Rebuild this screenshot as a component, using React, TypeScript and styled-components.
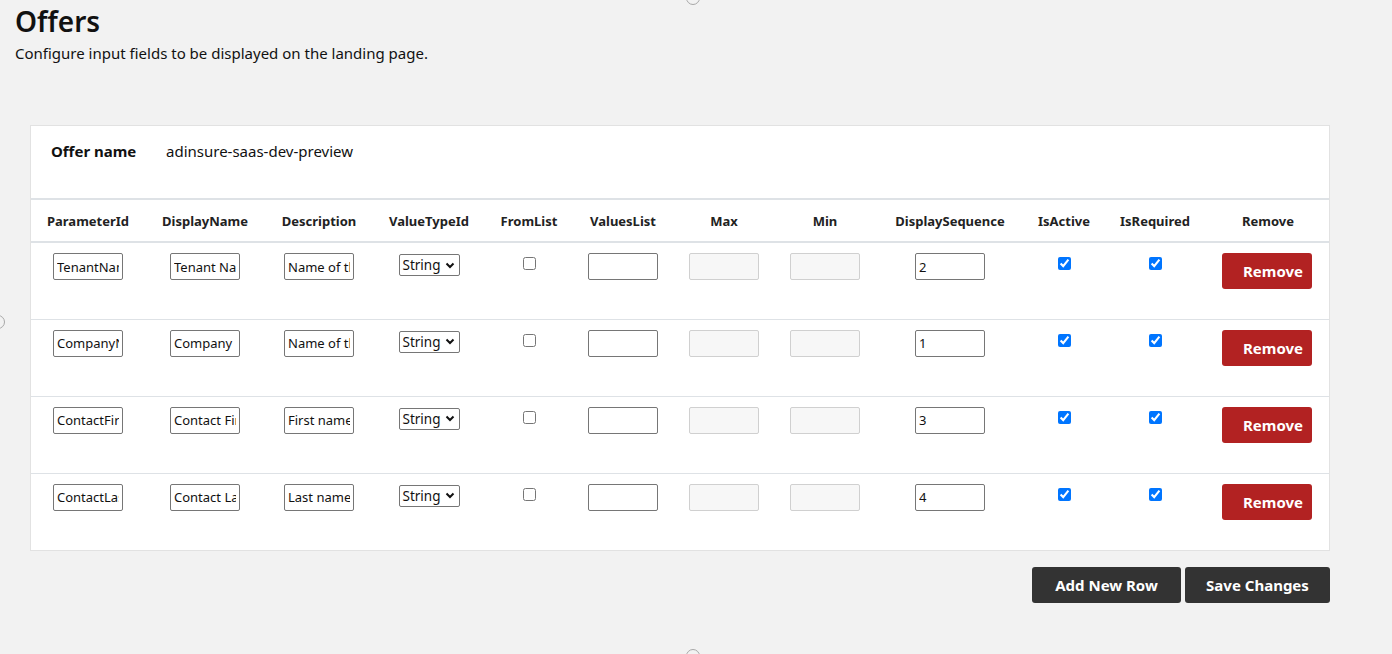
import React from "react";
import styled, { createGlobalStyle } from "styled-components";

const Global = createGlobalStyle`
  html, body { margin: 0; padding: 0; background: #f2f2f2; }
  body { font-family: "Noto Sans", "Open Sans", "Liberation Sans", sans-serif; color: #111; }
  * { box-sizing: border-box; }
`;

const Page = styled.div`
  position: relative;
  width: 1392px;
  height: 654px;
  overflow: hidden;
  padding: 0 62px 0 15px;
`;

const Title = styled.h1`
  margin: 0;
  padding-top: 2px;
  font-size: 28px;
  font-weight: 600;
  line-height: 38px;
  color: #111;
`;

const Subtitle = styled.p`
  margin: 0;
  padding-top: 2px;
  font-size: 15px;
  line-height: 22px;
  color: #111;
`;

const Card = styled.div`
  margin: 61px 0 0 15px;
  width: 1300px;
  background: #fff;
  border: 1px solid #e2e2e2;
`;

const OfferRow = styled.div`
  display: flex;
  align-items: center;
  height: 72px;
  padding: 0 20px 22px;
  font-size: 15px;
`;

const OfferLabel = styled.span`
  width: 115px;
  font-weight: 700;
`;

const Table = styled.table`
  width: 100%;
  border-collapse: collapse;
  table-layout: fixed;
`;

const Th = styled.th`
  height: 43px;
  font-size: 13px;
  font-weight: 700;
  color: #222;
  text-align: center;
  border-top: 2px solid #dee2e6;
  border-bottom: 2px solid #dee2e6;
  padding: 0;
`;

const Tr = styled.tr<{ $last?: boolean }>`
  height: 77px;
  border-bottom: ${(p) => (p.$last ? "none" : "1px solid #dee2e6")};
`;

const Td = styled.td`
  vertical-align: top;
  text-align: center;
  padding: 10px 0 0;
`;

const TextInput = styled.input`
  width: 70px;
  height: 27px;
  border: 1px solid #767676;
  border-radius: 2px;
  padding: 0 3px;
  font-family: "Noto Sans", "Open Sans", sans-serif;
  font-size: 13px;
  color: #111;
  background: #fff;
  outline: none;
  &:disabled {
    background: #f7f7f7;
    border-color: #d0d0d0;
  }
`;

const SelectWrap = styled.div`
  display: inline-flex;
  align-items: center;
  justify-content: space-between;
  width: 61px;
  height: 22px;
  margin-top: 1px;
  border: 1px solid #767676;
  border-radius: 2px;
  padding: 0 4px 0 3px;
  font-size: 13.5px;
  background: #fff;
  color: #111;
`;

const Check = styled.input`
  width: 13px;
  height: 13px;
  margin: 4px 0 0;
  accent-color: #0075ff;
`;

const RemoveBtn = styled.button`
  width: 90px;
  height: 36px;
  border: none;
  border-radius: 3px;
  background: #b22222;
  color: #fff;
  font-family: "Noto Sans", "Open Sans", sans-serif;
  font-size: 15px;
  font-weight: 700;
  padding: 0 0 0 12px;
  margin-left: -2px;
`;

const Actions = styled.div`
  display: flex;
  justify-content: flex-end;
  gap: 4px;
  margin-top: 16px;
  width: 1315px;
`;

const DarkBtn = styled.button<{ $w: number }>`
  width: ${(p) => p.$w}px;
  height: 36px;
  border: none;
  border-radius: 3px;
  background: #333;
  color: #fff;
  font-family: "Noto Sans", "Open Sans", sans-serif;
  font-size: 15px;
  font-weight: 700;
`;

const Handle = styled.div<{ $x: number; $y: number }>`
  position: absolute;
  left: ${(p) => p.$x - 7}px;
  top: ${(p) => p.$y - 7}px;
  width: 14px;
  height: 14px;
  border-radius: 50%;
  border: 1.5px solid #a8a8a8;
  background: #f2f2f2;
`;

const cols = [114, 120, 108, 112, 88, 100, 102, 100, 150, 78, 104, 122];
const headers = [
  "ParameterId",
  "DisplayName",
  "Description",
  "ValueTypeId",
  "FromList",
  "ValuesList",
  "Max",
  "Min",
  "DisplaySequence",
  "IsActive",
  "IsRequired",
  "Remove",
];

const rows = [
  { id: "TenantName", name: "Tenant Name", desc: "Name of the tenant", seq: "2" },
  { id: "CompanyName", name: "Company Name", desc: "Name of the company", seq: "1" },
  { id: "ContactFirstName", name: "Contact First Name", desc: "First name of contact", seq: "3" },
  { id: "ContactLastName", name: "Contact Last Name", desc: "Last name of contact", seq: "4" },
];

const Chevron = () => (
  <svg width="10" height="7" viewBox="0 0 10 7">
    <path d="M1.5 1.5 L5 5 L8.5 1.5" fill="none" stroke="#111" strokeWidth="2" />
  </svg>
);

export default function App() {
  return (
    <Page>
      <Global />
      <Title>Offers</Title>
      <Subtitle>Configure input fields to be displayed on the landing page.</Subtitle>
      <Card>
        <OfferRow>
          <OfferLabel>Offer name</OfferLabel>
          <span>adinsure-saas-dev-preview</span>
        </OfferRow>
        <Table>
          <colgroup>
            {cols.map((w, i) => (
              <col key={i} style={{ width: w }} />
            ))}
          </colgroup>
          <thead>
            <tr>
              {headers.map((h) => (
                <Th key={h}>{h}</Th>
              ))}
            </tr>
          </thead>
          <tbody>
            {rows.map((r, i) => (
              <Tr key={r.id} $last={i === rows.length - 1}>
                <Td><TextInput defaultValue={r.id} /></Td>
                <Td><TextInput defaultValue={r.name} /></Td>
                <Td><TextInput defaultValue={r.desc} /></Td>
                <Td>
                  <SelectWrap>
                    <span>String</span>
                    <Chevron />
                  </SelectWrap>
                </Td>
                <Td><Check type="checkbox" /></Td>
                <Td><TextInput /></Td>
                <Td><TextInput disabled /></Td>
                <Td><TextInput disabled /></Td>
                <Td><TextInput defaultValue={r.seq} /></Td>
                <Td><Check type="checkbox" defaultChecked /></Td>
                <Td><Check type="checkbox" defaultChecked /></Td>
                <Td><RemoveBtn>Remove</RemoveBtn></Td>
              </Tr>
            ))}
          </tbody>
        </Table>
      </Card>
      <Actions>
        <DarkBtn $w={149}>Add New Row</DarkBtn>
        <DarkBtn $w={145}>Save Changes</DarkBtn>
      </Actions>
      <Handle $x={693} $y={-2} />
      <Handle $x={-2} $y={322} />
      <Handle $x={693} $y={656} />
    </Page>
  );
}
